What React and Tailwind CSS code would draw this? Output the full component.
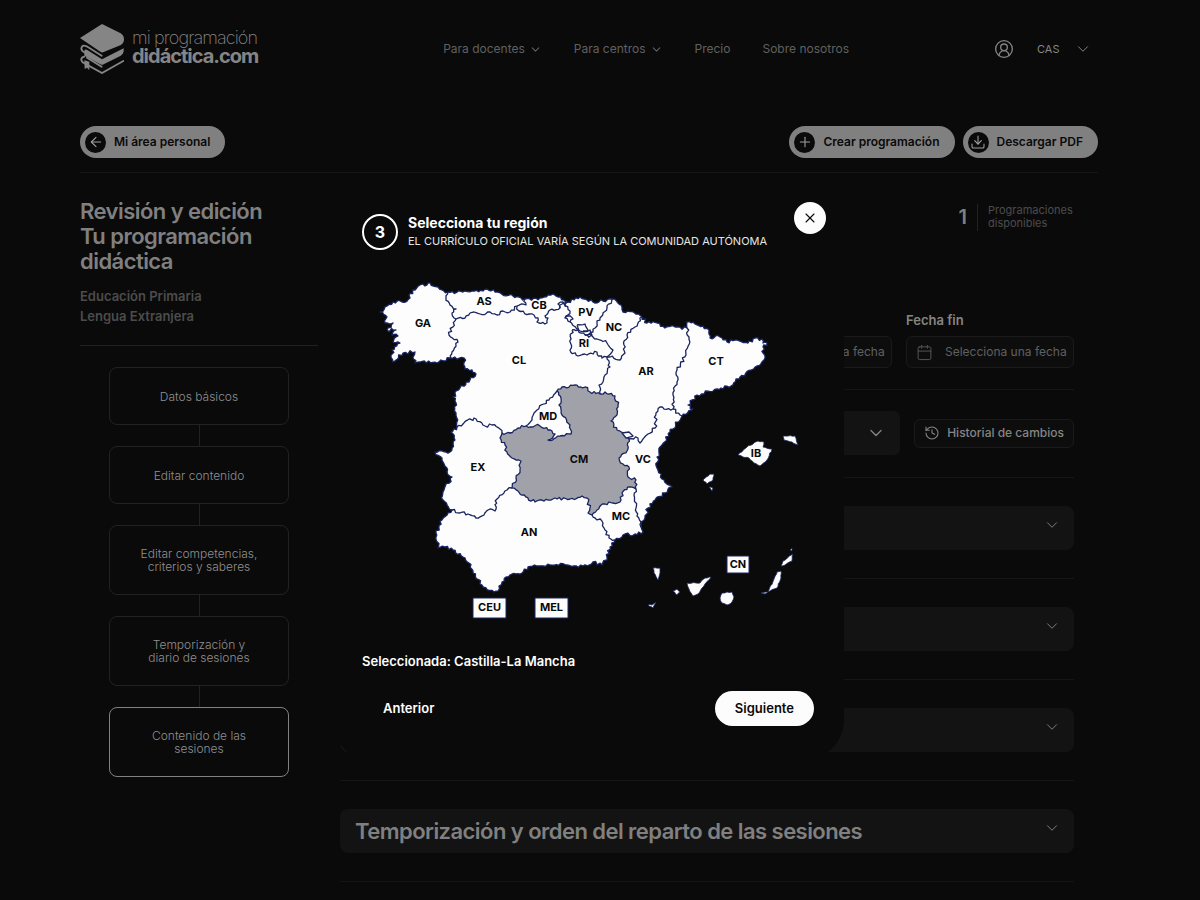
import React from "react";
import {
  ArrowLeft, Plus, Download, ChevronDown, Calendar, History, X, CircleUserRound,
} from "lucide-react";

const COAST =
  "380,312 385,307 393,302 402,302 410,298 409,295 415,290 420,285 425,286 428,283 433,286 438,287 442,290 448,292 463,292 483,291 487,289 495,292 513,296 525,299 540,298 548,295 553,294 558,297 568,302 580,297 593,302 603,301 612,299 618,303 622,307 623,312 628,311 642,317 647,323 657,323 665,328 675,327 687,328 687,322 695,324 703,326 709,330 710,338 720,337 727,342 737,340 748,343 755,338 762,339 763,343 767,343 763,347 764,360 757,366 740,377 731,386 717,389 697,395 688,405 693,409 682,416 670,432 662,445 657,457 657,468 662,479 672,487 665,493 655,500 648,508 645,518 641,527 643,532 635,534 623,535 615,540 610,547 607,557 602,565 593,562 583,566 567,565 550,565 537,566 528,567 522,573 510,575 502,582 498,591 494,592 482,585 473,573 469,563 463,557 453,550 445,547 438,548 436,533 442,520 452,510 443,500 443,492 452,477 447,472 442,458 435,452 450,452 455,440 451,432 457,427 456,413 456,403 453,397 460,388 470,380 476,374 472,370 465,369 464,358 450,358 437,363 420,362 415,363 413,357 415,352 403,353 393,362 392,350 400,343 393,342 398,336 392,335 396,330 387,330 393,323 385,323 387,317";

const CASTILLA_LA_MANCHA =
  "557,391 562,387 575,385 585,387 590,392 600,394 605,392 615,396 618,405 617,415 611,421 617,430 624,433 629,439 628,449 619,458 623,464 629,467 628,477 636,480 636,489 630,487 622,493 620,502 613,503 605,504 597,510 592,515 588,513 590,508 587,498 582,496 570,499 555,498 535,502 520,494 512,488 516,478 520,470 521,461 512,458 507,452 505,445 500,438 502,433 510,433 518,428 526,426 540,426 548,430 555,434 548,440 560,436 571,434 570,425 562,415 559,405 561,398";

const BORDERS = [
  "448,292 446,298 450,305 456,309 452,313 456,319 449,335 458,342 452,352 451,358",
  "456,319 465,318 470,313 480,314 490,312 497,315 503,311 510,312 517,306",
  "517,306 526,305 525,299",
  "517,306 519,311 529,314 538,318 537,322 547,323 548,318 545,316 550,310 560,308 562,304 568,302",
  "560,308 558,304 563,302 566,306",
  "568,302 565,306 570,311 565,318 570,322 574,326 579,329",
  "565,318 568,316 573,319 570,322",
  "572,330 570,350 578,356 587,355 597,352 602,358 607,357 613,350 607,343 593,337 585,335 578,330 572,330",
  "577,325 585,324 588,330 580,331 577,325",
  "583,331 590,330 592,335 585,335",
  "612,299 607,308 600,318 597,323 593,332 587,335",
  "642,317 635,327 627,335 624,345 625,353 620,360 610,357 607,357",
  "607,357 610,367 605,375 603,382 599,385 600,394",
  "557,391 550,398 544,404 537,410 534,413 532,420 526,426",
  "457,427 463,424 474,418 485,426 492,425 500,429 502,433",
  "452,510 460,513 468,514 476,518 484,515 488,510 495,511 497,499 507,490 512,488",
  "629,439 638,438 640,443 648,434 655,428 656,413 660,407 673,409",
  "687,328 689,337 686,355 677,370 677,382 673,395 673,409",
  "673,409 680,415 682,416",
  "592,515 603,523 605,530 609,538 615,540",
  "636,489 634,495 636,508 637,516 641,522 641,527",
];

const ISLANDS = [
  "738,455 747,447 758,441 764,442 763,447 772,449 767,460 760,466 754,463 749,458 743,457",
  "783,436 795,436 798,445 792,442 784,440",
  "703,480 710,474 714,474 713,480 707,484",
  "709,487 713,488 712,491",
  "653,568 660,568 660,573 658,580 654,573",
  "673,591 677,589 680,592 677,595",
  "648,605 652,605 656,602 653,608",
  "687,583 700,583 705,578 711,577 702,588 698,594 693,596 689,589",
  "720,598 722,593 727,592 732,592 734,597 732,602 727,605 722,603",
  "761,593 768,592 777,572 781,571 781,578 777,588 770,591 765,594",
  "781,566 783,561 793,554 792,561 785,565",
  "790,550 792,548 792,551",
];

const ENCLAVE = "622,433 629,432 633,436 626,438";

const LABELS = [
  ["GA", 423, 323], ["AS", 484, 301], ["CB", 539, 305], ["PV", 586, 312],
  ["NC", 614, 327], ["RI", 584, 343], ["CL", 519, 360], ["AR", 646, 371],
  ["CT", 716, 361], ["MD", 548, 416], ["CM", 579, 459], ["EX", 478, 467],
  ["VC", 643, 459], ["IB", 756, 453], ["MC", 621, 516], ["AN", 529, 532],
];

const BOXED = [
  ["CEU", 473, 598, 33], ["MEL", 535, 598, 33], ["CN", 727, 556, 22],
];

// Breaks every segment into short uneven steps so borders read as natural ones.
function rugged(text, closed, amount = 1.3) {
  const pts = text.split(" ").map((p) => p.split(",").map(Number));
  const out = [];
  const last = closed ? pts.length : pts.length - 1;
  for (let i = 0; i < last; i++) {
    const [a, b] = pts[i];
    const [c, d] = pts[(i + 1) % pts.length];
    const len = Math.hypot(c - a, d - b);
    const n = Math.max(1, Math.round(len / 2.2));
    out.push([a, b]);
    for (let k = 1; k < n; k++) {
      const x = a + ((c - a) * k) / n;
      const y = b + ((d - b) * k) / n;
      const s = Math.sin(x * 12.9898 + y * 78.233) * 43758.5453;
      const off = (s - Math.floor(s) - 0.5) * 2 * amount;
      out.push([x - ((d - b) / len) * off, y + ((c - a) / len) * off]);
    }
  }
  if (!closed) out.push(pts[pts.length - 1]);
  return out.map(([x, y]) => x.toFixed(1) + "," + y.toFixed(1)).join(" ");
}

function SpainMap() {
  return (
    <svg viewBox="362 272 452 356" className="block h-auto w-full" role="img" aria-label="Mapa de comunidades autónomas">
      <g stroke="#1a2560" strokeWidth="1.3" strokeLinejoin="round" fill="#fdfdfe">
        <polygon points={rugged(COAST, true, 1.7)} />
        <polygon points={rugged(CASTILLA_LA_MANCHA, true, 1.6)} fill="#a1a1aa" />
        <polygon points={ENCLAVE} />
        {BORDERS.map((b) => (
          <polyline key={b} points={rugged(b, false, 1.6)} fill="none" />
        ))}
        {ISLANDS.map((b) => (
          <polygon key={b} points={rugged(b, true, 0.5)} strokeWidth="0.8" />
        ))}
        {BOXED.map(([t, x, y, w]) => (
          <rect key={t} x={x} y={y} width={w} height={t === "CN" ? 17 : 20} strokeWidth="1" />
        ))}
      </g>
      <g fill="#0a0a0a" fontSize="11" fontWeight="700" textAnchor="middle" className="font-['Inter',sans-serif]">
        {LABELS.map(([t, x, y]) => (
          <text key={t} x={x} y={y + 4}>{t}</text>
        ))}
        {BOXED.map(([t, x, y, w]) => (
          <text key={t} x={x + w / 2} y={y + (t === "CN" ? 12 : 13)}>{t}</text>
        ))}
      </g>
    </svg>
  );
}

function Logo() {
  return (
    <a href="#" className="flex items-center gap-2 text-[#858585]">
      <svg viewBox="59 71 132 150" className="h-[50px] w-11" fill="currentColor" aria-hidden="true">
        <path d="M125 71 181 99Q191 105 191 117T180 135L130 155Q125 158 120 154L59 113Z" />
        <path d="M125 177 190 144Q192 160 180 167L130 192Q125 195 120 192L72 166V151Q74 144 82 150Z" />
        <g fill="none" stroke="currentColor" strokeWidth="5.5" strokeLinecap="round">
          <path d="M124 166 79 138Q64 132 63 145 64 153 74 157L84 162" />
          <path d="M72 169Q62 171 63 180 65 187 74 190L125 218 189 182" />
          <path d="M80 172 124 199" />
        </g>
        <path d="M72 180 87 184V210L80 202 73 206Z" />
      </svg>
      <span className="flex flex-col pb-1">
        <span className="text-lg leading-[18px] font-extralight tracking-tighter">mi programación</span>
        <span className="text-xl leading-[18px] font-bold tracking-tighter">didáctica.com</span>
      </span>
    </a>
  );
}

function PillButton({ icon: Icon, children }) {
  return (
    <button type="button" className="flex h-8 items-center gap-2 rounded-full bg-[#808080] pr-[15px] pl-[5px] text-[12px] font-semibold text-[#0a0a0a]">
      <span className="flex size-[21px] items-center justify-center rounded-full bg-[#0a0a0a] text-[#a0a0a0]">
        <Icon size={16} strokeWidth={1.6} />
      </span>
      {children}
    </button>
  );
}

function DateField({ id, label }) {
  return (
    <div className="flex w-[168px] flex-col gap-1.5">
      <label htmlFor={id} className="text-[13px] leading-5 font-semibold text-[#858585]">{label}</label>
      <div className="flex h-8 items-center gap-3 rounded-md border border-[#1a1a1a] bg-[#0d0d0d] pl-[9px] text-[#555]">
        <Calendar size={17} strokeWidth={1.4} className="shrink-0" />
        <input id={id} placeholder="Selecciona una fecha" className="w-full min-w-0 bg-transparent text-[12px] outline-none placeholder:text-[#606060]" />
      </div>
    </div>
  );
}

const STEPS = [
  { lines: ["Datos básicos"] },
  { lines: ["Editar contenido"] },
  { lines: ["Editar competencias,", "criterios y saberes"] },
  { lines: ["Temporización y", "diario de sesiones"] },
  { lines: ["Contenido de las", "sesiones"], active: true },
];

const SECTIONS = ["", "", "", "Temporización y orden del reparto de las sesiones"];

function Divider() {
  return <hr className="border-t border-[#151515]" />;
}

function RegionDialog() {
  return (
    <div className="absolute inset-x-0 top-0 flex justify-center pt-[182px] pr-6">
      <div role="dialog" aria-modal="true" aria-labelledby="dialog-title" className="relative w-full max-w-lg rounded-[40px] bg-[#0a0a0a] px-[30px] pt-[31px] pb-[34px] text-white">
        <button type="button" aria-label="Cerrar" className="absolute top-5 right-[18px] flex size-8 items-center justify-center rounded-full bg-[#fcfcfc] text-[#0a0a0a]">
          <X size={16} strokeWidth={1.6} />
        </button>
        <div className="flex items-center gap-2.5">
          <span className="flex size-9 shrink-0 items-center justify-center rounded-full border-2 border-white text-base font-bold">3</span>
          <div>
            <h2 id="dialog-title" className="text-sm leading-[19px] font-bold">Selecciona tu región</h2>
            <p className="text-[11px] leading-[19px] font-normal whitespace-nowrap text-[#e5e5e5]">EL CURRÍCULO OFICIAL VARÍA SEGÚN LA COMUNIDAD AUTÓNOMA</p>
          </div>
        </div>
        <div className="mt-[21px]"><SpainMap /></div>
        <p className="mt-[23px] text-[13px] leading-5 font-semibold">Seleccionada: Castilla-La Mancha</p>
        <div className="mt-5 flex items-center justify-between text-[13px] font-semibold">
          <button type="button" className="h-[35px] px-[21px]">Anterior</button>
          <button type="button" className="h-[35px] rounded-full bg-[#fcfcfc] px-5 text-[#0a0a0a]">Siguiente</button>
        </div>
      </div>
    </div>
  );
}

export default function App() {
  return (
    <div className="relative min-h-screen overflow-hidden bg-[#0a0a0a] pb-4 font-['Inter',sans-serif]">
      <div className="pr-[102px] pl-20">
        <header className="flex h-[98px] items-center text-[12px] text-[#606060]">
          <div className="flex-1"><Logo /></div>
          <nav className="flex items-center gap-8">
            <button type="button" className="flex items-center gap-1">Para docentes <ChevronDown size={13} /></button>
            <button type="button" className="flex items-center gap-1">Para centros <ChevronDown size={13} /></button>
            <a href="#">Precio</a>
            <a href="#">Sobre nosotros</a>
          </nav>
          <div className="flex w-[249px] items-center justify-end gap-[23px] pr-1.5 text-[#858585]">
            <a href="#" aria-label="Mi cuenta"><CircleUserRound size={20} strokeWidth={1.6} /></a>
            <div className="relative flex items-center">
              <select aria-label="Idioma" className="w-[55px] appearance-none bg-transparent text-[11px] outline-none">
                <option>CAS</option>
              </select>
              <ChevronDown size={18} strokeWidth={1.3} className="pointer-events-none absolute right-0" />
            </div>
          </div>
        </header>

        <div className="flex items-center justify-between pt-7 pb-3.5">
          <PillButton icon={ArrowLeft}>Mi área personal</PillButton>
          <div className="flex gap-2">
            <PillButton icon={Plus}>Crear programación</PillButton>
            <PillButton icon={Download}>Descargar PDF</PillButton>
          </div>
        </div>
        <Divider />

        <div className="flex gap-[22px] pr-6">
          <aside className="w-[238px] shrink-0 pt-[26px]">
            <h1 className="text-[22px] leading-[25px] font-semibold tracking-tight text-[#808080]">
              Revisión y edición<br />Tu programación didáctica
            </h1>
            <div className="mt-3 border-b border-[#202020] pb-[19px] text-[13px] leading-5 font-semibold text-[#4c4c4c]">
              <p>Educación Primaria</p>
              <p>Lengua Extranjera</p>
            </div>
            <nav className="flex flex-col items-center pt-[21px]">
              {STEPS.map((s, i) => (
                <React.Fragment key={s.lines[0]}>
                  {i > 0 && <span className="h-[21px] w-px bg-[#222]" />}
                  <a
                    href="#"
                    className={
                      "flex w-[180px] flex-col items-center justify-center rounded-lg border text-center text-[12px] leading-[13px] font-light text-[#909090] " +
                      (s.lines.length > 1 ? "h-[70px] " : "h-[58px] ") +
                      (s.active ? "border-[#808080]" : "border-[#222]")
                    }
                  >
                    {s.lines.map((l) => <span key={l}>{l}</span>)}
                  </a>
                </React.Fragment>
              ))}
            </nav>
          </aside>

          <main className="min-w-0 flex-1 pt-[30px]">
            <div className="flex items-center justify-end gap-2.5 text-[11px] leading-[13px] text-[#4c4c4c]">
              <span className="text-xl font-semibold text-[#808080]">1</span>
              <span className="h-[27px] w-px bg-[#222]" />
              <span className="w-[86px]">Programaciones disponibles</span>
            </div>
            <div className="mt-[79px] mb-[21px] flex justify-end gap-3.5">
              <DateField id="start" label="Fecha inicio" />
              <DateField id="end" label="Fecha fin" />
            </div>
            <Divider />
            <div className="mt-[21px] mb-[22px] flex items-center gap-3.5">
              <div className="relative flex h-11 flex-1 items-center rounded-md bg-[#131313] text-[#858585]">
                <select aria-label="Sesión" className="h-full w-full appearance-none bg-transparent px-4 outline-none" />
                <ChevronDown size={20} strokeWidth={1.6} className="pointer-events-none absolute right-3.5" />
              </div>
              <button type="button" className="flex h-[29px] items-center gap-[7px] rounded-md border border-[#1a1a1a] bg-[#0d0d0d] px-[9px] text-[12px] font-medium text-[#858585]">
                <History size={16} strokeWidth={1.6} />
                Historial de cambios
              </button>
            </div>
            <Divider />
            {SECTIONS.map((title, i) => (
              <React.Fragment key={i}>
                <button type="button" aria-label={title || "Sección " + (i + 1)} className="my-7 flex h-11 w-full items-center justify-between rounded-lg bg-[#131313] pr-[13px] pl-[15px] text-[#808080]">
                  <span className="text-[22px] leading-8 font-semibold tracking-tight">{title}</span>
                  <ChevronDown size={18} strokeWidth={1.3} className="mb-1.5" />
                </button>
                <Divider />
              </React.Fragment>
            ))}
          </main>
        </div>
      </div>
      <RegionDialog />
    </div>
  );
}
